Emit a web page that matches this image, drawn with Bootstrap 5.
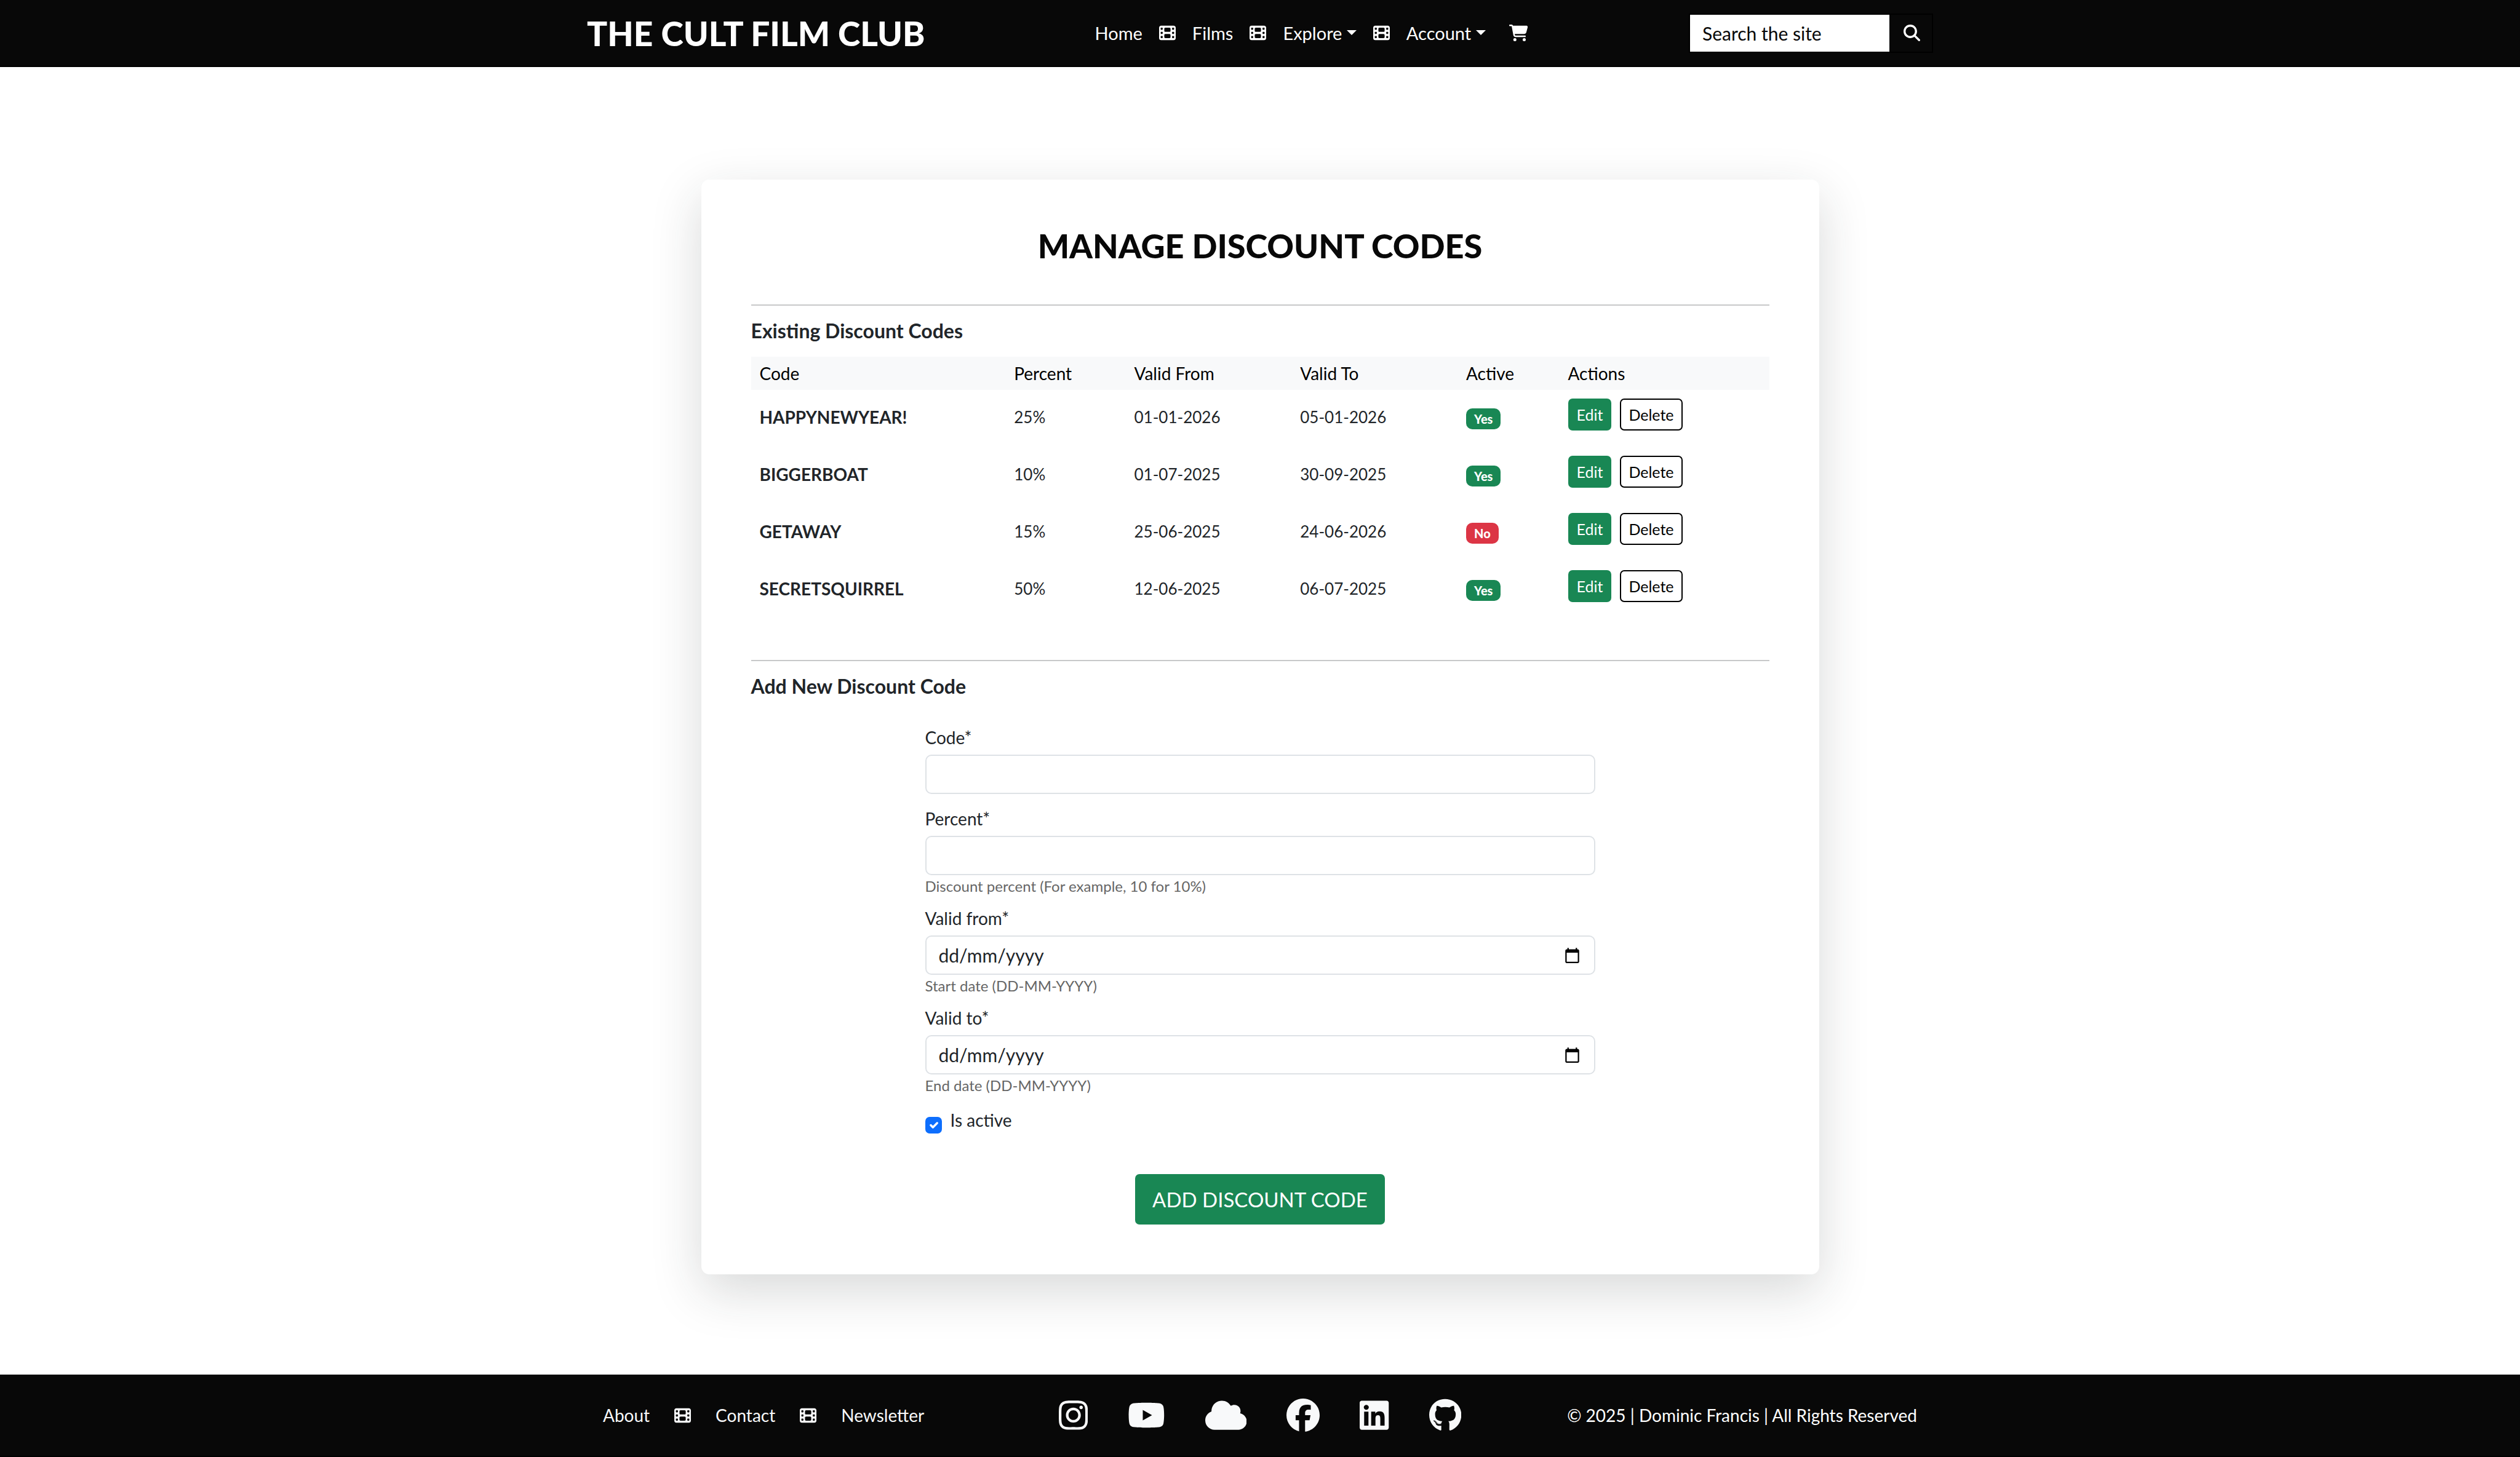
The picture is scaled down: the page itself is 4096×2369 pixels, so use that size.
<!DOCTYPE html>
<html lang="en-GB">
<head>
<meta charset="utf-8">
<meta name="viewport" content="width=device-width, initial-scale=1">
<title>Manage Discount Codes | The Cult Film Club</title>
<link rel="stylesheet" href="https://cdn.jsdelivr.net/npm/bootstrap@5.3.0/dist/css/bootstrap.min.css">
<style>
  :root { --bs-font-sans-serif: Lato, sans-serif; --bs-border-width: 2px; }
  html { font-size: 27px; }
  body { font-family: Lato, sans-serif; font-size: 28px; line-height: 40px; background: #fff; }
  .site-container { max-width: 2228px; padding: 0 20px; }
  .site-bar { background: #080808; color: #fff; }
  .site-bar a { color: inherit; text-decoration: none; }
  .site-header { height: 109px; border-bottom: 2px solid #000; }
  .brand-title { font-size: 55px; font-weight: 900; line-height: 64px; }
  .ico { height: 27px; fill: currentColor; display: block; }
  .nav-line { gap: 27px; font-size: 29px; margin-left: 14px; }
  .nav-line .basket { margin-left: 11px; }
  .search-box { width: 397px; height: 64px; border: 2px solid #000; }
  .search-box input { background: #fff; border: 0; border-radius: 0; color: #080808; padding: 0 20px; font-size: 30px; }
  .search-box input::placeholder { color: #080808; opacity: 1; }
  .search-box button { width: 69px; border: 0; background: none; color: #fff; padding: 0 0 0 3px; }
  .panel-wrap { padding: 183px 0 162px; }
  .panel-card { width: 1817px; max-width: 100%; border-radius: 13px; padding: 81px; background: #fff; }
  .panel-title { font-size: 54px; font-weight: 900; line-height: 64px; color: #080808; margin: -5px 0 63px; }
  .rule { border-top: 2px solid #212529; opacity: .25; margin: 0; }
  .section-title { font-size: 32px; line-height: 36px; font-weight: 700; margin: 23px 0 0; }
  .codes-table { margin: 24px 0 67px; table-layout: fixed; line-height: 40px; }
  .codes-table > thead th { font-weight: 400; padding: 7px 14px; background: #f8f9fa; color: #000; border: 0; }
  .codes-table > tbody td { padding: 11px 14px 16px; border: 0; height: 93px; vertical-align: middle; font-size: 26px; }
  .codes-table > tbody td:last-child { padding: 14px 14px 13px; }
  .codes-table strong { font-size: 28px; }
  .c-code { width: 25%; } .c-percent { width: 11.8%; } .c-date { width: 16.3%; } .c-active { width: 10%; }
  .flag { font-size: 20px; font-weight: 900; line-height: 20px; padding: 7px 13px; border-radius: 10px; vertical-align: middle; }
  .row-btn { font-size: 25px; line-height: 36px; padding: 6px 12px; border: 2px solid transparent; border-radius: 7px; margin-bottom: 14px; }
  .row-btn.outline { border-color: #000; color: #000; background: #fff; margin-left: 14px; }
  .green { background: #198754; color: #fff; }
  .code-form { width: 1089px; max-width: 100%; margin: 47px auto 0; }
  .field { margin-bottom: 22px; }
  .field.helped { margin-bottom: 16px; }
  .field label { display: block; margin-bottom: 10px; line-height: 36px; }
  .field .form-control { height: 64px; border: 2px solid #dee2e6; border-radius: 10px; font-size: 30px; padding: 10px 20px; }
  .field .form-control::placeholder { color: #212529; opacity: 1; }
  .field .date-pick { background: #fff; border: 2px solid #dee2e6; border-left: 0; border-radius: 0 10px 10px 0; padding: 0 22px; }
  .field .date-pick svg { width: 27px; height: 27px; display: block; }
  .field .help { font-size: 24px; line-height: 36px; color: #666; }
  .check-line { margin-top: 22px; gap: 14px; }
  .check-line .form-check-input { width: 27px; height: 27px; margin: 11px 0 0; border-radius: 7px; }
  .check-line label { line-height: 32px; }
  .submit-btn { font-size: 33px; line-height: 50px; padding: 16px 28px; border: 0; border-radius: 7px; margin-top: 66px; }
  .site-footer { height: 134px; color: #f8f9fa; border-bottom: 2px solid #000; }
  .foot-part { flex: 1 1 0; }
  .foot-links { gap: 40px; padding-left: 26px; }
  .social { gap: 65px; }
  .social svg { height: 54px; fill: currentColor; display: block; }
  .copy { padding-right: 26px; color: #fff; }
</style>
<script src="https://cdn.jsdelivr.net/npm/bootstrap@5.3.0/dist/js/bootstrap.bundle.min.js"></script>
</head>
<body class="d-flex flex-column min-vh-100">
<svg class="d-none" aria-hidden="true">
  <symbol id="film" viewBox="0 0 512 512"><path d="M0 96C0 60.7 28.7 32 64 32H448c35.3 0 64 28.7 64 64V416c0 35.3-28.7 64-64 64H64c-35.3 0-64-28.7-64-64V96zM48 368v32c0 8.8 7.2 16 16 16H96c8.8 0 16-7.2 16-16V368c0-8.8-7.2-16-16-16H64c-8.8 0-16 7.2-16 16zm368-16c-8.8 0-16 7.2-16 16v32c0 8.8 7.2 16 16 16h32c8.8 0 16-7.2 16-16V368c0-8.8-7.2-16-16-16H416zM48 240v32c0 8.8 7.2 16 16 16H96c8.8 0 16-7.2 16-16V240c0-8.8-7.2-16-16-16H64c-8.8 0-16 7.2-16 16zm368-16c-8.8 0-16 7.2-16 16v32c0 8.8 7.2 16 16 16h32c8.8 0 16-7.2 16-16V240c0-8.8-7.2-16-16-16H416zM48 112v32c0 8.8 7.2 16 16 16H96c8.8 0 16-7.2 16-16V112c0-8.8-7.2-16-16-16H64c-8.8 0-16 7.2-16 16zM416 96c-8.8 0-16 7.2-16 16v32c0 8.8 7.2 16 16 16h32c8.8 0 16-7.2 16-16V112c0-8.8-7.2-16-16-16H416zM160 128v64c0 17.7 14.3 32 32 32H320c17.7 0 32-14.3 32-32V128c0-17.7-14.3-32-32-32H192c-17.7 0-32 14.3-32 32zm32 160c-17.7 0-32 14.3-32 32v64c0 17.7 14.3 32 32 32H320c17.7 0 32-14.3 32-32V320c0-17.7-14.3-32-32-32H192z"/></symbol>
  <symbol id="calendar" viewBox="0 0 24 24"><path d="M20 3h-1V1h-2v2H7V1H5v2H4c-1.100 0-2 .9-2 2v16c0 1.100.9 2 2 2h16c1.100 0 2-.9 2-2V5c0-1.100-.9-2-2-2zm0 18H4V8h16v13z"/></symbol>
</svg>

<header class="site-bar site-header d-flex align-items-center">
  <div class="container-fluid site-container d-flex align-items-center justify-content-between">
    <a href="#" class="brand-title">THE CULT FILM CLUB</a>
    <nav class="nav-line d-flex align-items-center" aria-label="Main">
      <a href="#">Home</a>
      <svg class="ico" width="27" aria-hidden="true"><use href="#film"/></svg>
      <a href="#">Films</a>
      <svg class="ico" width="27" aria-hidden="true"><use href="#film"/></svg>
      <a href="#" class="dropdown-toggle" data-bs-toggle="dropdown">Explore</a>
      <svg class="ico" width="27" aria-hidden="true"><use href="#film"/></svg>
      <a href="#" class="dropdown-toggle" data-bs-toggle="dropdown">Account</a>
      <a href="#" class="basket" aria-label="Basket"><svg class="ico" viewBox="0 0 576 512"><path d="M0 24C0 10.700 10.700 0 24 0H69.500c22 0 41.500 12.800 50.600 32h411c26.300 0 45.500 25 38.600 50.400l-41 152.300c-8.500 31.400-37 53.300-69.500 53.300H170.700l5.400 28.500c2.200 11.300 12.100 19.500 23.600 19.500H488c13.300 0 24 10.700 24 24s-10.700 24-24 24H199.700c-34.600 0-64.300-24.600-70.700-58.500L77.400 54.500c-.7-3.800-4-6.500-7.900-6.500H24C10.700 48 0 37.300 0 24zM128 464a48 48 0 1 1 96 0 48 48 0 1 1 -96 0zm336-48a48 48 0 1 1 0 96 48 48 0 1 1 0-96z"/></svg></a>
    </nav>
    <form class="search-box d-flex">
      <input type="text" class="form-control h-100" placeholder="Search the site" aria-label="Search the site">
      <button type="button" class="d-flex align-items-center justify-content-center flex-shrink-0" aria-label="Search"><svg class="ico" viewBox="0 0 512 512"><path d="M416 208c0 45.900-14.900 88.300-40 122.700L502.600 457.400c12.500 12.500 12.500 32.800 0 45.300s-32.800 12.500-45.300 0L330.700 376c-34.400 25.200-76.800 40-122.700 40C93.100 416 0 322.900 0 208S93.100 0 208 0S416 93.100 416 208zM208 352a144 144 0 1 0 0-288 144 144 0 1 0 0 288z"/></svg></button>
    </form>
  </div>
</header>

<main class="panel-wrap flex-grow-1">
  <div class="panel-card shadow-lg mx-auto">
    <h1 class="panel-title text-center">MANAGE DISCOUNT CODES</h1>
    <hr class="rule">
    <h2 class="section-title">Existing Discount Codes</h2>
    <table class="table codes-table">
      <colgroup><col class="c-code"><col class="c-percent"><col class="c-date"><col class="c-date"><col class="c-active"><col></colgroup>
      <thead><tr><th scope="col">Code</th><th scope="col">Percent</th><th scope="col">Valid From</th><th scope="col">Valid To</th><th scope="col">Active</th><th scope="col">Actions</th></tr></thead>
      <tbody>
        <tr><td><strong>HAPPYNEWYEAR!</strong></td><td>25%</td><td>01-01-2026</td><td>05-01-2026</td><td><span class="badge flag bg-success">Yes</span></td><td><div class="d-flex"><button type="button" class="row-btn green">Edit</button><button type="button" class="row-btn outline">Delete</button></div></td></tr>
        <tr><td><strong>BIGGERBOAT</strong></td><td>10%</td><td>01-07-2025</td><td>30-09-2025</td><td><span class="badge flag bg-success">Yes</span></td><td><div class="d-flex"><button type="button" class="row-btn green">Edit</button><button type="button" class="row-btn outline">Delete</button></div></td></tr>
        <tr><td><strong>GETAWAY</strong></td><td>15%</td><td>25-06-2025</td><td>24-06-2026</td><td><span class="badge flag bg-danger">No</span></td><td><div class="d-flex"><button type="button" class="row-btn green">Edit</button><button type="button" class="row-btn outline">Delete</button></div></td></tr>
        <tr><td><strong>SECRETSQUIRREL</strong></td><td>50%</td><td>12-06-2025</td><td>06-07-2025</td><td><span class="badge flag bg-success">Yes</span></td><td><div class="d-flex"><button type="button" class="row-btn green">Edit</button><button type="button" class="row-btn outline">Delete</button></div></td></tr>
      </tbody>
    </table>
    <hr class="rule">
    <h2 class="section-title">Add New Discount Code</h2>
    <form class="code-form">
      <div class="field"><label for="code">Code*</label><input id="code" type="text" class="form-control"></div>
      <div class="field helped"><label for="percent">Percent*</label><input id="percent" type="text" inputmode="numeric" class="form-control"><div class="help">Discount percent (For example, 10 for 10%)</div></div>
      <div class="field helped"><label for="from">Valid from*</label><div class="input-group"><input id="from" type="text" placeholder="dd/mm/yyyy" class="form-control border-end-0"><button type="button" class="date-pick" aria-label="Choose start date"><svg><use href="#calendar"/></svg></button></div><div class="help">Start date (DD-MM-YYYY)</div></div>
      <div class="field helped"><label for="to">Valid to*</label><div class="input-group"><input id="to" type="text" placeholder="dd/mm/yyyy" class="form-control border-end-0"><button type="button" class="date-pick" aria-label="Choose end date"><svg><use href="#calendar"/></svg></button></div><div class="help">End date (DD-MM-YYYY)</div></div>
      <div class="check-line d-flex align-items-start"><input id="active" type="checkbox" class="form-check-input" checked><label for="active">Is active</label></div>
      <div class="d-flex justify-content-center"><button type="button" class="submit-btn green">ADD DISCOUNT CODE</button></div>
    </form>
  </div>
</main>

<footer class="site-bar site-footer d-flex align-items-center">
  <div class="container-fluid site-container d-flex align-items-center">
    <nav class="foot-part foot-links d-flex align-items-center" aria-label="Footer">
      <a href="#">About</a>
      <svg class="ico" width="27" aria-hidden="true"><use href="#film"/></svg>
      <a href="#">Contact</a>
      <svg class="ico" width="27" aria-hidden="true"><use href="#film"/></svg>
      <a href="#">Newsletter</a>
    </nav>
    <div class="social d-flex align-items-center">
      <a href="#" aria-label="Instagram"><svg viewBox="0 0 448 512"><path d="M224.100 141c-63.600 0-114.900 51.300-114.900 114.900s51.300 114.900 114.900 114.900S339 319.500 339 255.900 287.700 141 224.100 141zm0 189.600c-41.100 0-74.700-33.500-74.700-74.700s33.500-74.700 74.700-74.700 74.700 33.500 74.700 74.700-33.600 74.700-74.700 74.700zm146.400-194.300c0 14.900-12 26.800-26.800 26.800-14.900 0-26.800-12-26.800-26.800s12-26.800 26.800-26.800 26.800 12 26.800 26.800zm76.100 27.200c-1.700-35.900-9.900-67.700-36.200-93.900-26.200-26.200-58-34.400-93.900-36.200-37-2.100-147.900-2.100-184.900 0-35.800 1.700-67.600 9.900-93.900 36.100s-34.400 58-36.200 93.900c-2.100 37-2.100 147.900 0 184.900 1.700 35.900 9.900 67.700 36.200 93.900s58 34.400 93.900 36.200c37 2.100 147.900 2.100 184.900 0 35.900-1.700 67.700-9.900 93.900-36.200 26.200-26.200 34.400-58 36.200-93.900 2.100-37 2.100-147.800 0-184.800zM398.800 388c-7.800 19.600-22.900 34.700-42.600 42.600-29.500 11.700-99.500 9-132.100 9s-102.700 2.600-132.100-9c-19.600-7.800-34.700-22.900-42.600-42.600-11.700-29.500-9-99.500-9-132.100s-2.600-102.700 9-132.100c7.800-19.600 22.900-34.700 42.600-42.600 29.500-11.700 99.500-9 132.100-9s102.700-2.600 132.100 9c19.600 7.800 34.700 22.900 42.600 42.600 11.700 29.500 9 99.500 9 132.100s2.700 102.700-9 132.100z"/></svg></a>
      <a href="#" aria-label="YouTube"><svg viewBox="0 0 576 512"><path d="M549.655 124.083c-6.281-23.650-24.787-42.276-48.284-48.597C458.781 64 288 64 288 64S117.220 64 74.629 75.486c-23.497 6.322-42.003 24.947-48.284 48.597-11.412 42.867-11.412 132.305-11.412 132.305s0 89.438 11.412 132.305c6.281 23.650 24.787 41.500 48.284 47.821C117.220 448 288 448 288 448s170.780 0 213.371-11.486c23.497-6.321 42.003-24.171 48.284-47.821 11.412-42.867 11.412-132.305 11.412-132.305s0-89.438-11.412-132.305zm-317.510 213.508V175.185l142.739 81.205-142.739 81.201z"/></svg></a>
      <a href="#" aria-label="Cloud"><svg viewBox="0 0 640 512"><path d="M0 336c0 79.500 64.500 144 144 144H512c70.700 0 128-57.300 128-128c0-61.900-44-113.600-102.400-125.400c4.100-10.700 6.400-22.400 6.400-34.600c0-53-43-96-96-96c-19.700 0-38.100 6-53.300 16.200C367 64.200 315.300 32 256 32C167.600 32 96 103.600 96 192c0 2.700 .1 5.400 .2 8.100C40.200 219.800 0 273.200 0 336z"/></svg></a>
      <a href="#" aria-label="Facebook"><svg viewBox="0 0 512 512"><path d="M512 256C512 114.600 397.400 0 256 0S0 114.600 0 256C0 376 82.700 476.800 194.200 504.500V334.200H141.400V256h52.800V222.300c0-87.100 39.400-127.500 125-127.500c16.200 0 44.200 3.200 55.700 6.400V172c-6-.6-16.500-1-29.600-1c-42 0-58.200 15.900-58.200 57.200V256h83.600l-14.400 78.200H287V510.100C413.800 494.800 512 386.900 512 256z"/></svg></a>
      <a href="#" aria-label="LinkedIn"><svg viewBox="0 0 448 512"><path d="M416 32H31.900C14.300 32 0 46.500 0 64.300v383.400C0 465.500 14.300 480 31.900 480H416c17.600 0 32-14.500 32-32.300V64.300c0-17.800-14.400-32.300-32-32.300zM135.400 416H69V202.200h66.500V416zm-33.200-243c-21.300 0-38.500-17.300-38.500-38.500S80.900 96 102.200 96c21.200 0 38.500 17.300 38.500 38.500 0 21.300-17.200 38.500-38.500 38.500zm282.100 243h-66.400V312c0-24.800-.5-56.700-34.500-56.700-34.600 0-39.900 27-39.900 54.900V416h-66.400V202.200h63.700v29.200h.9c8.900-16.800 30.600-34.500 62.900-34.500 67.200 0 79.700 44.300 79.700 101.900V416z"/></svg></a>
      <a href="#" aria-label="GitHub"><svg viewBox="0 0 496 512"><path d="M165.900 397.400c0 2-2.300 3.600-5.200 3.600-3.300.3-5.600-1.300-5.600-3.600 0-2 2.300-3.600 5.200-3.600 3-.3 5.600 1.300 5.600 3.600zm-31.100-4.500c-.7 2 1.300 4.300 4.300 4.900 2.600 1 5.600 0 6.200-2s-1.300-4.300-4.300-5.200c-2.600-.7-5.500.3-6.200 2.300zm44.200-1.700c-2.900.7-4.900 2.600-4.600 4.900.3 2 2.900 3.300 5.900 2.600 2.900-.7 4.900-2.600 4.600-4.600-.3-1.900-3-3.200-5.900-2.900zM244.800 8C106.100 8 0 113.300 0 252c0 110.900 69.800 205.800 169.500 239.200 12.800 2.300 17.300-5.600 17.300-12.100 0-6.200-.3-40.400-.3-61.400 0 0-70 15-84.700-29.800 0 0-11.400-29.100-27.800-36.600 0 0-22.900-15.700 1.600-15.400 0 0 24.900 2 38.600 25.800 21.900 38.600 58.600 27.500 72.900 20.900 2.300-16 8.800-27.100 16-33.700-55.900-6.200-112.300-14.300-112.300-110.500 0-27.500 7.600-41.300 23.600-58.900-2.600-6.500-11.100-33.300 2.600-67.900 20.900-6.500 69 27 69 27 20-5.600 41.500-8.500 62.800-8.500s42.800 2.900 62.800 8.500c0 0 48.100-33.600 69-27 13.700 34.700 5.200 61.400 2.600 67.900 16 17.700 25.800 31.500 25.800 58.900 0 96.500-58.900 104.200-114.800 110.500 9.200 7.900 17 22.900 17 46.400 0 33.700-.3 75.400-.3 83.600 0 6.500 4.600 14.400 17.300 12.100C428.200 457.800 496 362.900 496 252 496 113.300 383.500 8 244.800 8zM97.200 352.900c-1.300 1-1 3.300.7 5.200 1.600 1.600 3.900 2.300 5.200 1 1.300-1 1-3.300-.7-5.200-1.600-1.600-3.900-2.300-5.200-1zm-10.800-8.100c-.7 1.300.3 2.900 2.300 3.900 1.600 1 3.600.7 4.300-.7.7-1.300-.3-2.900-2.300-3.900-2-.6-3.600-.3-4.300.7zm32.400 35.600c-1.600 1.300-1 4.300 1.300 6.200 2.300 2.300 5.200 2.600 6.500 1 1.300-1.300.7-4.300-1.300-6.200-2.200-2.300-5.200-2.600-6.500-1zm-11.400-14.700c-1.600 1-1.600 3.600 0 5.900 1.600 2.300 4.300 3.300 5.600 2.300 1.600-1.300 1.600-3.900 0-6.200-1.400-2.300-4-3.300-5.600-2z"/></svg></a>
    </div>
    <div class="foot-part copy text-end">© 2025 | Dominic Francis | All Rights Reserved</div>
  </div>
</footer>
</body>
</html>
